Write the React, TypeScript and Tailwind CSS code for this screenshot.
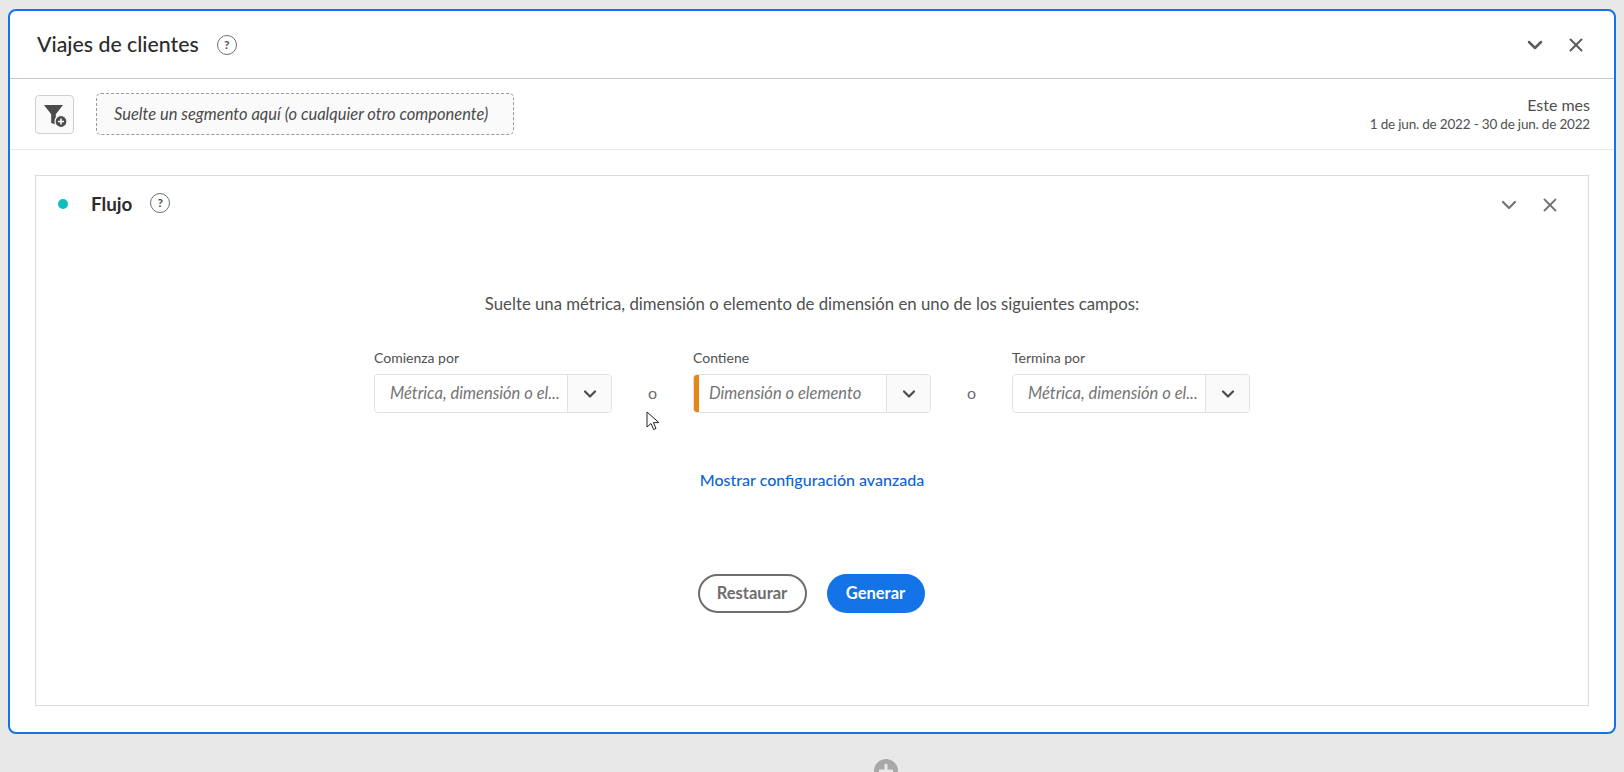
import { ChevronDown, X } from "lucide-react";

const font = "font-['Lato',sans-serif]";

const HelpIcon = () => (
  <span className="flex h-[20px] w-[20px] items-center justify-center rounded-full border-[1.5px] border-[#6e6e6e] text-[12px] font-bold leading-none text-[#505050]">
    ?
  </span>
);

const Field = ({ label, placeholder, accent }: { label: string; placeholder: string; accent?: boolean }) => (
  <div className="w-[238px]">
    <div className="mb-[8px] h-[17px] text-[14px] leading-[17px] text-[#505050]">{label}</div>
    <div className="flex h-[39px] overflow-hidden rounded-[4px] border border-[#e1e1e1] bg-white">
      {accent && <div className="w-[5px] shrink-0 bg-[#e68619]" />}
      <div className={`min-w-0 flex-1 truncate text-[16.5px] italic leading-[37px] text-[#747474] ${accent ? "pl-[10px]" : "pl-[15px]"} pr-[2px]`}>
        {placeholder}
      </div>
      <div className="flex w-[44px] shrink-0 items-center justify-center border-l border-[#e1e1e1] bg-[#fafafa]">
        <ChevronDown size={20} strokeWidth={2.6} className="text-[#4b4b4b]" />
      </div>
    </div>
  </div>
);

const Or = () => <div className="w-[81px] pt-[24px] text-center text-[16px] leading-[39px] text-[#6e6e6e]">o</div>;

export default function App() {
  return (
    <div className={`relative h-[772px] overflow-hidden bg-[#e8e8e8] px-[8px] pt-[9px] ${font}`}>
      <div className="flex h-[725px] flex-col rounded-[8px] border-2 border-[#1473e6] bg-white">
        {/* Header */}
        <div className="flex h-[68px] shrink-0 items-center border-b border-[#c8c8c8] pl-[27px] pr-[27px]">
          <h1 className="text-[21.3px] font-medium text-[#2c2c2c]">Viajes de clientes</h1>
          <div className="ml-[18px]"><HelpIcon /></div>
          <div className="ml-auto flex items-center gap-[18px] text-[#5c5c5c]">
            <ChevronDown size={24} strokeWidth={2.5} />
            <X size={22} strokeWidth={2.2} />
          </div>
        </div>

        {/* Toolbar */}
        <div className="flex h-[71px] shrink-0 items-center border-b border-[#e8e8e8] pl-[25px] pr-[24px]">
          <button className="mt-[1px] flex h-[39px] w-[39px] items-center justify-center rounded-[4px] border border-[#cfcfcf] bg-[#fafafa]">
            <svg width="28" height="28" viewBox="0 0 28 28">
              <path d="M3 4h19l-7.2 9.2v10.3l-4.6-1.4v-8.9z" fill="#4b4b4b" />
              <circle cx="20" cy="20.5" r="6" fill="#4b4b4b" stroke="#fafafa" strokeWidth="1.2" />
              <path d="M20 17.5v6M17 20.5h6" stroke="#fafafa" strokeWidth="1.6" />
            </svg>
          </button>
          <div className="ml-[22px] flex h-[42px] w-[418px] items-center rounded-[5px] border border-dashed border-[#9a9a9a] bg-[#fafafa] pl-[17px] text-[16.5px] italic text-[#4b4b4b]">
            Suelte un segmento aquí (o cualquier otro componente)
          </div>
          <div className="ml-auto text-right">
            <div className="text-[16px] leading-[20px] text-[#505050]">Este mes</div>
            <div className="text-[13.5px] leading-[18px] tracking-[-0.19px] text-[#505050]">1 de jun. de 2022 - 30 de jun. de 2022</div>
          </div>
        </div>

        {/* Flow panel */}
        <div className="pl-[25px] pr-[25px] pt-[25px]">
          <div className="flex h-[531px] flex-col border border-[#dcdcdc]">
            <div className="flex h-[56px] shrink-0 items-center pl-[22px] pr-[27px]">
              <span className="h-[10px] w-[10px] rounded-full bg-[#0fbdbd]" />
              <span className="ml-[23px] text-[18.8px] font-bold text-[#2c2c2c]">Flujo</span>
              <div className="mb-[2px] ml-[18px]"><HelpIcon /></div>
              <div className="ml-auto mt-[2px] flex items-center gap-[18px] text-[#747474]">
                <ChevronDown size={24} strokeWidth={2.2} />
                <X size={22} strokeWidth={2} />
              </div>
            </div>

            <div className="flex flex-col items-center">
              <p className="mt-[61px] text-[16.75px] leading-[22px] text-[#505050]">
                Suelte una métrica, dimensión o elemento de dimensión en uno de los siguientes campos:
              </p>
              <div className="mt-[34px] flex">
                <Field label="Comienza por" placeholder="Métrica, dimensión o el..." />
                <Or />
                <Field label="Contiene" placeholder="Dimensión o elemento" accent />
                <Or />
                <Field label="Termina por" placeholder="Métrica, dimensión o el..." />
              </div>
              <a className="mt-[56px] text-[16px] font-medium leading-[22px] text-[#0d66d0]">Mostrar configuración avanzada</a>
              <div className="mr-[2px] mt-[83px] flex gap-[20px]">
                <button className="h-[39px] w-[109px] rounded-full border-2 border-[#6e6e6e] text-[16.5px] font-bold text-[#6e6e6e]">Restaurar</button>
                <button className="h-[39px] w-[98px] rounded-full bg-[#1473e6] text-[16.5px] font-bold text-white">Generar</button>
              </div>
            </div>
          </div>
        </div>
      </div>

      {/* Add panel button, clipped by the window */}
      <svg className="absolute left-[874px] top-[759px]" width="24" height="24" viewBox="0 0 24 24">
        <circle cx="12" cy="12" r="12" fill="#a8a8a8" />
        <path d="M12 5v14M5 12h14" stroke="#e8e8e8" strokeWidth="3" />
      </svg>

      {/* Mouse pointer */}
      <svg className="absolute left-[646px] top-[411px]" width="16" height="22" viewBox="0 0 16 22">
        <path d="M1 1v15l4-3.5 2.6 6 2.4-1-2.6-5.8 5.4-.2z" fill="#fff" stroke="#222" strokeWidth="1" strokeLinejoin="round" />
      </svg>
    </div>
  );
}
